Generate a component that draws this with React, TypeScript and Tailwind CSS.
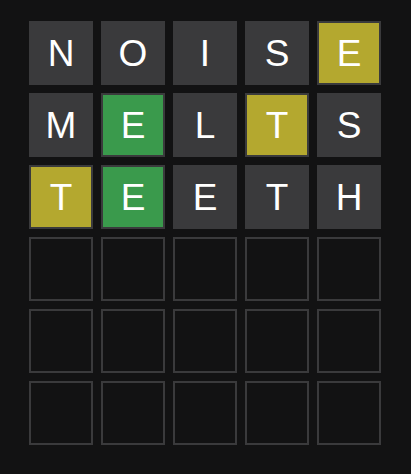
const rows: { l: string; s: "gray" | "green" | "yellow" }[][] = [
  [
    { l: "N", s: "gray" },
    { l: "O", s: "gray" },
    { l: "I", s: "gray" },
    { l: "S", s: "gray" },
    { l: "E", s: "yellow" },
  ],
  [
    { l: "M", s: "gray" },
    { l: "E", s: "green" },
    { l: "L", s: "gray" },
    { l: "T", s: "yellow" },
    { l: "S", s: "gray" },
  ],
  [
    { l: "T", s: "yellow" },
    { l: "E", s: "green" },
    { l: "E", s: "gray" },
    { l: "T", s: "gray" },
    { l: "H", s: "gray" },
  ],
];

const fill = {
  gray: "bg-[#3a3a3c]",
  green: "bg-[#3a9a4c]",
  yellow: "bg-[#b4a82f]",
};

export default function App() {
  const empty = Array.from({ length: 3 }, () => Array.from({ length: 5 }));
  return (
    <div className="min-h-screen w-[411px] h-[474px] bg-[#121213] pt-[21px] pl-[29px] font-['Liberation_Sans',Arial,sans-serif]">
      <div className="grid grid-cols-[repeat(5,64px)] gap-2">
        {rows.map((row, r) =>
          row.map((t, c) => (
            <div
              key={`${r}-${c}`}
              className={`w-16 h-16 border-2 border-[#3a3a3c] ${fill[t.s]} flex items-center justify-center text-white text-[37px] leading-none`}
            >
              {t.l}
            </div>
          ))
        )}
        {empty.map((row, r) =>
          row.map((_, c) => (
            <div key={`e-${r}-${c}`} className="w-16 h-16 border-2 border-[#3a3a3c]" />
          ))
        )}
      </div>
    </div>
  );
}
